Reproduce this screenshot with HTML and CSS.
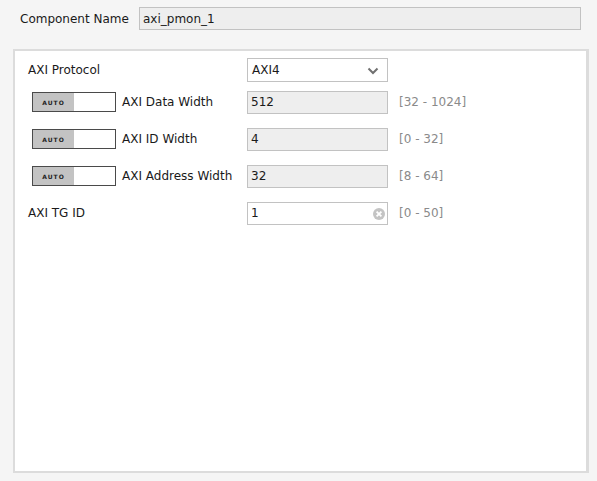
FILE: index.html
```html
<!DOCTYPE html>
<html>
<head>
<meta charset="utf-8">
<link rel="stylesheet" href="styles.css">
</head>
<body>
<div class="top">
  <span class="top-label">Component Name</span>
  <div class="field name-field">axi_pmon_1</div>
</div>
<div class="panel">
  <div class="row first">
    <span class="label plain">AXI Protocol</span>
    <div class="field select">AXI4
      <svg class="chev" width="12" height="8" viewBox="0 0 12 8"><path d="M1.5 1.5 L6 6 L10.5 1.5" fill="none" stroke="#707070" stroke-width="2"/></svg>
    </div>
  </div>
  <div class="row">
    <div class="toggle"><span class="auto">AUTO</span><span class="blank"></span></div>
    <span class="label tl">AXI Data Width</span>
    <div class="field ro">512</div>
    <span class="range">[32 - 1024]</span>
  </div>
  <div class="row">
    <div class="toggle"><span class="auto">AUTO</span><span class="blank"></span></div>
    <span class="label tl">AXI ID Width</span>
    <div class="field ro">4</div>
    <span class="range">[0 - 32]</span>
  </div>
  <div class="row">
    <div class="toggle"><span class="auto">AUTO</span><span class="blank"></span></div>
    <span class="label tl">AXI Address Width</span>
    <div class="field ro">32</div>
    <span class="range">[8 - 64]</span>
  </div>
  <div class="row">
    <span class="label plain">AXI TG ID</span>
    <div class="field edit">1
      <svg class="clear" width="12" height="12" viewBox="0 0 12 12"><circle cx="6" cy="6" r="6" fill="#c4c4c4"/><path d="M3.6 3.6 L8.4 8.4 M8.4 3.6 L3.6 8.4" stroke="#fff" stroke-width="1.8"/></svg>
    </div>
    <span class="range">[0 - 50]</span>
  </div>
</div>
</body>
</html>
```
FILE: styles.css
```css
html, body {
  margin: 0;
  padding: 0;
  background: #f5f5f5;
  font-family: "DejaVu Sans", "Liberation Sans", sans-serif;
  font-size: 12px;
  color: #1a1a1a;
}
.top {
  display: flex;
  align-items: center;
  height: 23px;
  padding: 7px 0 0 20px;
}
.top-label {
  width: 119px;
}
.field {
  box-sizing: border-box;
  height: 23px;
  border: 1px solid #c2c2c2;
  display: flex;
  align-items: center;
  padding-left: 3px;
  position: relative;
}
.name-field {
  width: 442px;
  background: #eeeeee;
}
.panel {
  box-sizing: border-box;
  margin: 19px 0 0 13px;
  width: 576px;
  height: 424px;
  background: #fff;
  border: 2px solid #dcdcdc;
  border-right-width: 3px;
  padding: 7px 0 0 0;
}
.row {
  display: flex;
  align-items: center;
  height: 24px;
  margin-top: 13px;
}
.row.first {
  margin-top: 0;
}
.row.first + .row {
  margin-top: 8px;
}
.label.plain {
  margin-left: 13px;
  width: 219px;
}
.toggle {
  box-sizing: border-box;
  margin-left: 17px;
  width: 84px;
  height: 20px;
  border: 1px solid #4a4a4a;
  display: flex;
}
.auto {
  width: 41px;
  background: #c3c3c3;
  font-size: 6px;
  font-weight: bold;
  letter-spacing: 1px;
  display: flex;
  align-items: center;
  justify-content: center;
  color: #222;
}
.blank {
  flex: 1;
  background: #fff;
}
.label.tl {
  margin-left: 6px;
  width: 125px;
}
.select {
  width: 141px;
  height: 24px;
  background: #fff;
  padding-left: 4px;
}
.chev {
  position: absolute;
  right: 8px;
  top: 8px;
}
.ro {
  width: 141px;
  background: #eeeeee;
}
.edit {
  width: 141px;
  background: #fff;
}
.clear {
  position: absolute;
  right: 2px;
  top: 5px;
}
.range {
  margin-left: 11px;
  color: #8a8a8a;
}
```
